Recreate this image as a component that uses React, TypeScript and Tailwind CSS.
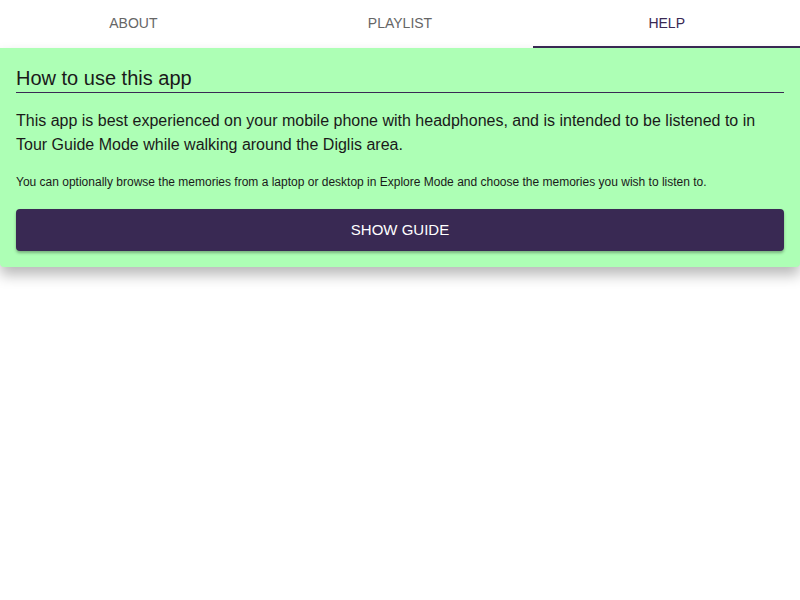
import React from "react";

export default function App() {
  const tabs = ["ABOUT", "PLAYLIST", "HELP"];
  return (
    <div className="w-[800px] h-[600px] bg-white" style={{ fontFamily: '"Liberation Sans", Arial, sans-serif' }}>
      <div className="flex h-12 bg-white">
        {tabs.map((t, i) => (
          <div
            key={t}
            className={`flex-1 flex items-center justify-center pb-[2px] text-[14px] relative ${i === 2 ? "text-[#392953]" : "text-[#666666]"}`}
          >
            {t}
            {i === 2 && <div className="absolute left-0 right-0 bottom-0 h-[2px] bg-[#392953]" />}
          </div>
        ))}
      </div>
      <div className="bg-[#adffb5] px-4 pt-[16px] pb-4 rounded-b-[4px] shadow-[0_8px_14px_rgba(0,0,0,0.28)]">
        <h2 className="text-[20px] leading-[28px] text-[#1a1a1a] border-b border-[#392953]">How to use this app</h2>
        <p className="text-[16px] leading-[24px] text-[#1a1a1a] mt-[16px]">
          This app is best experienced on your mobile phone with headphones, and is intended to be listened to in Tour Guide Mode while walking around the Diglis area.
        </p>
        <p className="text-[12px] leading-[18px] text-[#1a1a1a] mt-[16px]">
          You can optionally browse the memories from a laptop or desktop in Explore Mode and choose the memories you wish to listen to.
        </p>
        <button className="mt-[18px] w-full h-[42px] bg-[#392953] text-white text-[15px] rounded-[4px] shadow-[0_2px_3px_rgba(0,0,0,0.3)]">
          SHOW GUIDE
        </button>
      </div>
    </div>
  );
}
